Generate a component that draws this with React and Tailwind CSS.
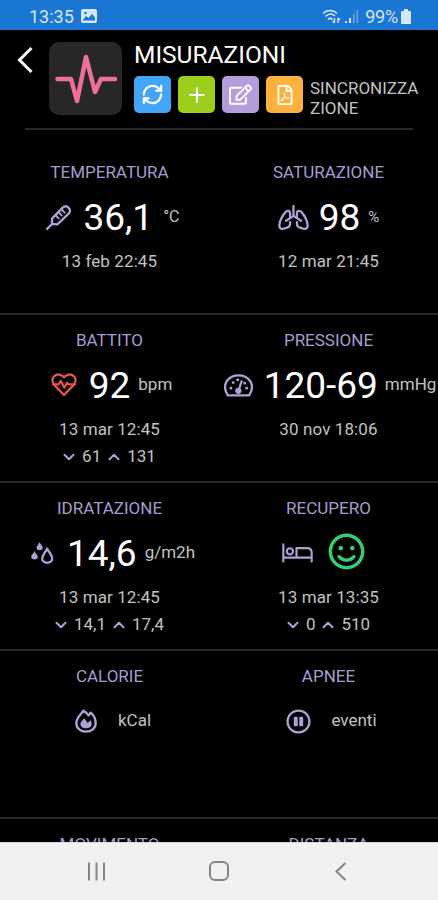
import React from 'react';
import { RefreshCw } from 'lucide-react';
import { FaRegEdit, FaRegFilePdf, FaRegPauseCircle, FaRegSmile } from 'react-icons/fa';

const ThermometerIcon = () => (
  <svg viewBox="0 0 75 75" className="w-[25px] h-[25px]" fill="none" stroke="#b0a0d8" strokeWidth="7" strokeLinecap="round" strokeLinejoin="round">
    <path d="M3 72 L18 57" />
    <path d="M18 57 V41 L50 8 C62 -3 80 14 68 26 L34 58 Z" />
    <path d="M29 31 L38 40 M38 22 L47 31 M47 14 L56 23" strokeWidth="6" />
  </svg>
);

const LungsIcon = () => (
  <svg viewBox="0 0 93 76" className="w-[31px] h-[25px]" fill="none" stroke="#b0a0d8" strokeWidth="7" strokeLinecap="round" strokeLinejoin="round">
    <path d="M46.500 3 V33 L24 48 M46.500 33 L69 48" />
    <path d="M36 37 V25 C36 15 26 16 21 23 C12 34 5 48 3.500 61 C3 71 9 74 17 72 L29 68 C35 66 36 62 36 56 V52" />
    <path d="M57 37 V25 C57 15 67 16 72 23 C81 34 88 48 89.500 61 C90 71 84 74 76 72 L64 68 C58 66 57 62 57 56 V52" />
  </svg>
);

const HeartRateIcon = () => (
  <svg viewBox="0 0 78 72" className="w-[26px] h-[24px]" fill="none" stroke="#e2574c" strokeWidth="7" strokeLinecap="round" strokeLinejoin="round">
    <path d="M39 13 C31 3 18 2 10 9 C2 17 3 28 11 37 L39 66 L67 37 C75 28 76 17 68 9 C60 2 47 3 39 13 Z" />
    <path d="M6 34 H23 L29 23 L40 44 L48 29 L52 34 H72" strokeWidth="6.500" />
  </svg>
);

const GaugeIcon = () => (
  <svg viewBox="0 0 87 70" className="w-[29px] h-[23px]" fill="none" stroke="#b0a0d8" strokeWidth="7" strokeLinecap="round" strokeLinejoin="round">
    <path d="M11 65 C-12 28 17 4 43.500 4 C70 4 99 28 76 65 Z" />
    <path d="M44 50 L53 22" />
    <circle cx="43" cy="51" r="6" fill="#b0a0d8" />
    <path d="M20 43 H20.500 M27 26 H27.500 M41 18 H41.500 M62 28 H62.500 M68 43 H68.500" strokeWidth="8.500" />
  </svg>
);

const DropsIcon = () => (
  <svg viewBox="0 0 68 66" className="w-[23px] h-[22px]" fill="#b0a0d8">
    <path d="M25 0 C27 7 35 11 35 17 C35 27 16 27 16 17 C16 11 23 7 25 0 Z" />
    <path d="M10 27 C12 34 20 39 20 45 C20 55 0 55 0 45 C0 39 8 34 10 27 Z" />
    <path d="M48 20 C43 31 33 39 33 49 C33 67 63 67 63 49 C63 39 53 31 48 20 Z" fill="none" stroke="#b0a0d8" strokeWidth="7" strokeLinejoin="round" />
  </svg>
);

const BedIcon = () => (
  <svg viewBox="0 0 94 60" className="w-[31px] h-[20px]" fill="none" stroke="#b0a0d8" strokeWidth="6.500" strokeLinecap="round" strokeLinejoin="round">
    <path d="M4 4 V56 M4 44 H90 M90 56 V29 C90 19 84 15 76 15 H44 V44" />
    <circle cx="24" cy="25" r="9.500" />
  </svg>
);

const FireIcon = () => (
  <svg viewBox="0 0 66 72" className="w-[22px] h-[24px]" fill="none" stroke="#b0a0d8" strokeWidth="7" strokeLinejoin="round">
    <path d="M25 5 C19 16 4 26 4 42 C4 58 17 68 33 68 C49 68 62 58 62 42 C62 29 55 18 47 11 L41 19 C36 12 31 9 25 5 Z" />
    <path d="M28 28 C22 35 16 39 16 45 C16 62 50 62 50 45 C50 41 48 37 46 34 L38 42 Z" fill="#b0a0d8" stroke="none" />
  </svg>
);

const Chevron = ({ up }) => (
  <svg viewBox="0 0 12 8" className="w-[12px] h-[8px]" fill="none" stroke="#b0a0d8" strokeWidth="2" strokeLinecap="round" strokeLinejoin="round">
    <path d={up ? 'M1.500 6.200 L6 1.800 L10.500 6.200' : 'M1.500 1.800 L6 6.200 L10.500 1.800'} />
  </svg>
);

const metrics = [
  { title: 'TEMPERATURA', icon: <ThermometerIcon />, value: '36,1', unit: '°C', date: '13 feb 22:45', row: 'pl-[7px]', iconGap: 'mr-[12px]', unitGap: 'ml-[10px]', unitSize: 'text-[16px]' },
  { title: 'SATURAZIONE', icon: <LungsIcon />, value: '98', unit: '%', date: '12 mar 21:45', row: '', iconGap: 'mr-[10px]', unitGap: 'ml-[8px]', unitSize: 'text-[15px]' },
  { title: 'BATTITO', icon: <HeartRateIcon />, value: '92', unit: 'bpm', date: '13 mar 12:45', min: '61', max: '131', row: 'pl-[4px]', iconGap: 'mr-[12px]', unitGap: 'ml-[8px]' },
  { title: 'PRESSIONE', icon: <GaugeIcon />, value: '120-69', unit: 'mmHg', date: '30 nov 18:06', row: 'pl-[3px]', iconGap: 'mr-[11px]', unitGap: 'ml-[7px]' },
  { title: 'IDRATAZIONE', icon: <DropsIcon />, value: '14,6', unit: 'g/m2h', date: '13 mar 12:45', min: '14,1', max: '17,4', row: 'pl-[7px]', iconGap: 'mr-[13px]', unitGap: 'ml-[8px]' },
  { title: 'RECUPERO', icon: <BedIcon />, value: <FaRegSmile className="w-[37px] h-[37px] -mt-[4px] text-[#35cb78]" />, date: '13 mar 13:35', min: '0', max: '510', row: 'pr-[11px]', iconGap: 'mr-[15px]' },
  { title: 'CALORIE', icon: <FireIcon />, unit: 'kCal', row: 'pl-[7px]', iconGap: 'mr-[21px]' },
  { title: 'APNEE', icon: <FaRegPauseCircle className="w-[25px] h-[25px] text-[#b0a0d8]" />, unit: 'eventi', row: 'pl-[6px]', iconGap: 'mr-[20px]' },
  { title: 'MOVIMENTO' },
  { title: 'DISTANZA' },
];

const Metric = ({ title, icon, value, unit, date, min, max, row, iconGap, unitGap, unitSize }) => (
  <div className="h-[168px] border-b-2 border-[#272727] pt-[13px] flex flex-col items-center text-[#c2c2c2] text-[17px] whitespace-nowrap">
    <h2 className="h-6 leading-6 text-[#a99bd0]">{title}</h2>
    <div className={`h-10 mt-[13px] flex items-center ${row || ''}`}>
      <span className={iconGap}>{icon}</span>
      {value && <span className="text-white text-[37px] leading-none">{value}</span>}
      {unit && <span className={unitGap}><span className={unitSize}>{unit}</span></span>}
    </div>
    <div className="h-6 leading-6 mt-[12px] tracking-[0.1px]">{date}</div>
    {min && (
      <div className="h-6 mt-[4px] flex items-center gap-[7px]">
        <Chevron />
        <span>{min}</span>
        <Chevron up />
        <span>{max}</span>
      </div>
    )}
  </div>
);

const StatusBar = () => (
  <div className="h-[30px] shrink-0 bg-[#1976d2] text-[#d5e7f8] flex items-center justify-between pl-[29px] pr-[27px] pt-[2px]">
    <div className="flex items-center gap-[7px]">
      <span className="text-[18px]">13:35</span>
      <svg viewBox="0 0 16 14" className="w-4 h-[14px]">
        <rect width="16" height="14" rx="2" fill="#d5e7f8" />
        <path d="M2 11 L5 7 L7.500 9 L11 5 L14 8.500 V11.500 H2 Z" fill="#1976d2" />
        <circle cx="4.500" cy="4" r="1.300" fill="#1976d2" />
      </svg>
    </div>
    <div className="flex items-center">
      <svg viewBox="0 0 19 15" className="w-[19px] h-[15px]" fill="none" stroke="#d5e7f8" strokeWidth="1.500">
        <path d="M1 4.500 C5 0.500 11 0.500 15 4.500 M3.500 7.500 C6.500 4.500 10 4.500 13 7 M6 10.500 C7.500 9 9 9 10.500 10.500" />
        <path d="M12.500 9 V14 M10.500 12 L12.500 14 M16 14 V9 M16 9 L18 11" strokeWidth="1.400" />
      </svg>
      <svg viewBox="0 0 14 15" className="w-[14px] h-[15px] ml-[4px]" fill="#d5e7f8">
        <path d="M0 12 H2 V14 H0 Z M4 9 H6 V14 H4 Z" />
        <path d="M8 5 H9.500 V14 H8 Z M11.500 1 H13 V14 H11.500 Z" opacity="0.450" />
      </svg>
      <span className="text-[18px] tracking-[-0.2px] ml-[6px]">99%</span>
      <svg viewBox="0 0 10 15" className="w-[10px] h-[15px] ml-[3px]" fill="#d5e7f8">
        <path d="M3 0 H7 V2 H9 Q10 2 10 3 V14 Q10 15 9 15 H1 Q0 15 0 14 V3 Q0 2 1 2 H3 Z" />
      </svg>
    </div>
  </div>
);

const Header = () => (
  <header className="h-[100px] shrink-0 mx-[25px] border-b-2 border-[#272727] pt-[12px] flex items-start">
    <button className="-ml-[8px] mt-[4px]">
      <svg viewBox="0 0 16 28" className="w-4 h-7" fill="none" stroke="#fff" strokeWidth="3">
        <path d="M14.500 2 L2.500 14 L14.500 26" />
      </svg>
    </button>
    <div className="w-[73px] h-[73px] ml-[16px] rounded-[10px] bg-[#272727] flex items-center justify-center shrink-0">
      <svg viewBox="0 0 62 50" className="w-[62px] h-[50px]" fill="none" stroke="#f0709a" strokeWidth="4.500" strokeLinecap="round" strokeLinejoin="round">
        <path d="M2.500 25 H16 L22 47 L31 3 L40 38 L46 25 H60" />
      </svg>
    </div>
    <div className="ml-[12px]">
      <h1 className="text-white text-[24.5px] leading-[26px]">MISURAZIONI</h1>
      <div className="flex mt-[8px] gap-[7px] text-white">
        <button className="w-[37px] h-[37px] rounded-[5px] bg-[#42a5f5] flex items-center justify-center"><RefreshCw size={23} strokeWidth={2.4} /></button>
        <button className="w-[37px] h-[37px] rounded-[5px] bg-[#9ccf1c] flex items-center justify-center">
          <svg viewBox="0 0 16 16" className="w-4 h-4" stroke="#fff" strokeWidth="2.200">
            <path d="M8 0.500 V15.500 M0.500 8 H15.500" />
          </svg>
        </button>
        <button className="w-[37px] h-[37px] rounded-[5px] bg-[#b39ddb] flex items-center justify-center"><FaRegEdit className="w-[23px] h-[21px]" /></button>
        <button className="w-[37px] h-[37px] rounded-[5px] bg-[#ffb13b] flex items-center justify-center"><FaRegFilePdf className="w-[16px] h-[20px]" /></button>
        <p className="text-[#c2c2c2] text-[17px] leading-5 mt-[2px] whitespace-nowrap">SINCRONIZZA<br />ZIONE</p>
      </div>
    </div>
  </header>
);

const NavBar = () => (
  <nav className="h-[58px] shrink-0 bg-[#f1f1f1] border-t border-[#d8d8d8] flex items-center pl-[87px] pb-[1px]">
    <svg viewBox="0 0 19 19" className="w-[19px] h-[19px]" stroke="#858585" strokeWidth="2">
      <path d="M2 0.500 V18.500 M9.500 0.500 V18.500 M17 0.500 V18.500" />
    </svg>
    <svg viewBox="0 0 20 20" className="w-5 h-5 ml-[103px]" fill="none" stroke="#858585" strokeWidth="2">
      <rect x="1" y="1" width="18" height="18" rx="5" />
    </svg>
    <svg viewBox="0 0 12 19" className="w-3 h-[19px] ml-[106px]" fill="none" stroke="#858585" strokeWidth="2">
      <path d="M10.500 1 L1.500 9.500 L10.500 18" />
    </svg>
  </nav>
);

const App = () => (
  <div className="w-full h-screen bg-black flex flex-col overflow-hidden font-['Roboto',sans-serif]">
    <StatusBar />
    <Header />
    <main className="flex-1 min-h-0 overflow-hidden pt-[17px]">
      <div className="grid grid-cols-2">
        {metrics.map((metric) => (
          <Metric key={metric.title} {...metric} />
        ))}
      </div>
    </main>
    <NavBar />
  </div>
);

export default App;
